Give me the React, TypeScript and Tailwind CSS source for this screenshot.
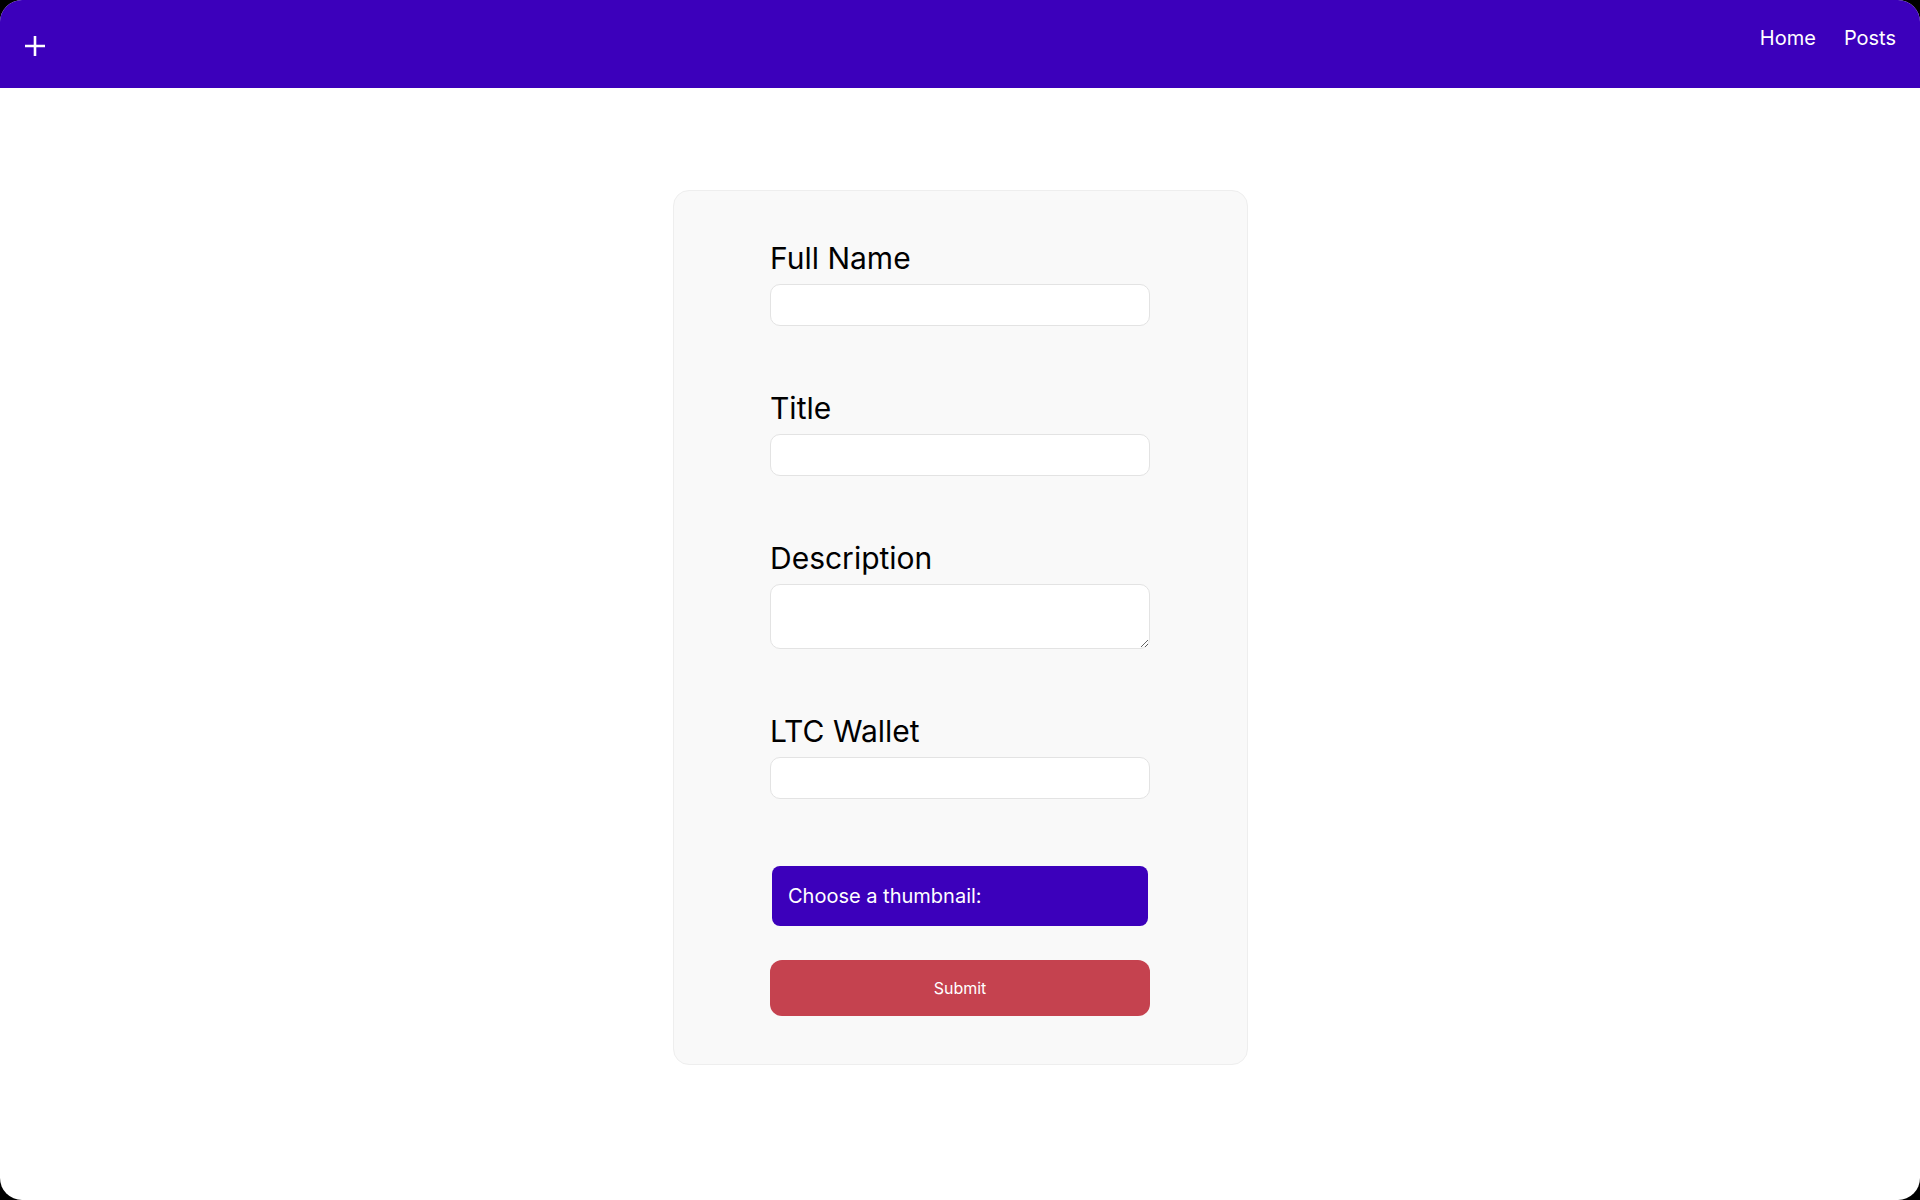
import React from "react";

const Field = ({ label, area }: { label: string; area?: boolean }) => (
  <div className="flex flex-col">
    <label className="text-[30px] leading-[34px] text-black mb-[9px]">{label}</label>
    {area ? (
      <textarea className="block w-[380px] h-[65px] rounded-[10px] border border-[#e3e3e3] bg-white outline-none" />
    ) : (
      <input className="block w-[380px] h-[42px] rounded-[10px] border border-[#e3e3e3] bg-white outline-none" />
    )}
  </div>
);

export default function App() {
  return (
    <div className="w-full h-[1200px] bg-black" style={{ fontFamily: "Inter, 'Noto Sans', sans-serif" }}>
      <div className="w-full h-full bg-white rounded-[22px] overflow-hidden flex flex-col">
        <nav className="h-[88px] bg-[#3c00bb] flex justify-between items-start text-white shrink-0">
          <div className="pl-[24px] pt-[35px]">
            <svg width="22" height="22" viewBox="0 0 22 22">
              <path d="M11 1v20M1 11h20" stroke="white" strokeWidth="2.6" />
            </svg>
          </div>
          <div className="flex gap-[28px] pr-[24px] pt-[25px] text-[20px] leading-[26px]">
            <a>Home</a>
            <a>Posts</a>
          </div>
        </nav>
        <div className="flex justify-center pt-[102px]">
          <form className="w-[575px] h-[875px] bg-[#f9f9f9] border border-[#eeeeee] rounded-[16px] flex flex-col items-center pt-[50px]">
            <div className="flex flex-col gap-[65px]">
              <Field label="Full Name" />
              <Field label="Title" />
              <Field label="Description" area />
              <Field label="LTC Wallet" />
            </div>
            <div className="mt-[67px] w-[376px] h-[60px] bg-[#3c00bb] rounded-[8px] flex items-center px-[16px] text-white text-[20px]">
              Choose a thumbnail:
            </div>
            <button type="button" className="mt-[34px] w-[380px] h-[56px] bg-[#c5424f] rounded-[12px] text-white text-[16px]">
              Submit
            </button>
          </form>
        </div>
      </div>
    </div>
  );
}
